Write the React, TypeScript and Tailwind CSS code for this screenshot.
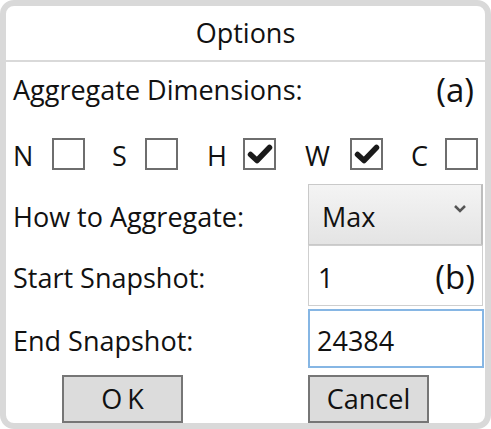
const dims = [
  { label: "N", labelW: "w-[39px]", ml: "ml-0", checked: false },
  { label: "S", labelW: "w-[33px]", ml: "ml-[27px]", checked: false },
  { label: "H", labelW: "w-[36px]", ml: "ml-[29px]", checked: true },
  { label: "W", labelW: "w-[45px]", ml: "ml-[29px]", checked: true },
  { label: "C", labelW: "w-[34px]", ml: "ml-[28px]", checked: false },
];

function Box({ checked }: { checked: boolean }) {
  return (
    <div className="w-[33px] h-[32px] border-2 border-[#6e6e6e] bg-white flex items-center justify-center">
      {checked && (
        <svg width="26" height="22" viewBox="0 0 26 22">
          <path d="M3.5 11.5 L10 17.5 L22.5 4.5" fill="none" stroke="#1a1a1a" strokeWidth="5.5" strokeLinecap="round" strokeLinejoin="round" />
        </svg>
      )}
    </div>
  );
}

export default function App() {
  return (
    <div className="w-[491px] h-[429px] bg-white">
      <div
        className="w-[491px] h-[429px] border-[6px] border-[#d9d9d9] rounded-[14px] bg-white flex flex-col text-[#111] text-[27px] leading-none"
        style={{ fontFamily: '"Open Sans", "Noto Sans", sans-serif' }}
      >
        <div className="h-[56px] flex items-center justify-center">Options</div>
        <div className="h-[2px] bg-[#d9d9d9]" />

        <div className="h-[54px] flex items-center justify-between pl-[7px] pr-[11px] pt-[3px]">
          <span>Aggregate Dimensions:</span>
          <span className="text-[33px]">(a)</span>
        </div>

        <div className="mt-[24px] h-[32px] flex items-center pl-[7px]">
          {dims.map((d) => (
            <div key={d.label} className={`flex items-center ${d.ml}`}>
              <span className={`${d.labelW} pt-[3px]`}>{d.label}</span>
              <Box checked={d.checked} />
            </div>
          ))}
        </div>

        <div className="mt-[14px] h-[61px] flex items-center pl-[7px]">
          <span className="w-[295px] pt-[5px]">How to Aggregate:</span>
          <div className="w-[175px] h-[61px] bg-gradient-to-b from-[#f4f4f4] to-[#e4e4e4] border border-[#c9c9c9] border-r-2 border-r-[#bdbdbd] flex items-center justify-between pl-[13px] pr-[14px]">
            <span className="pt-[5px]">Max</span>
            <svg width="14" height="10" viewBox="0 0 14 10" className="mb-[10px]">
              <path d="M2 2 L7 7 L12 2" fill="none" stroke="#555" strokeWidth="2.5" />
            </svg>
          </div>
        </div>

        <div className="h-[61px] flex items-center pl-[7px]">
          <span className="w-[295px] pt-[5px]">Start Snapshot:</span>
          <div className="w-[175px] h-[61px] bg-white border border-[#cfcfcf] flex items-center justify-between pl-[9px] pr-[7px]">
            <span className="pt-[5px]">1</span>
            <span className="text-[33px] pt-[2px]">(b)</span>
          </div>
        </div>

        <div className="mt-[3px] h-[59px] flex items-center pl-[7px]">
          <span className="w-[295px] pt-[5px]">End Snapshot:</span>
          <div className="w-[176px] h-[59px] bg-white border-2 border-[#86b6e4] flex items-center pl-[7px]">
            <span className="pt-[5px]">24384</span>
          </div>
        </div>

        <div className="mt-[7px] flex pl-[56px] relative z-10">
          <div className="w-[121px] h-[48px] bg-[#dcdcdc] border-2 border-[#767676] flex items-center justify-center tracking-[5px] pl-[5px]">
            OK
          </div>
          <div className="ml-[125px] w-[121px] h-[48px] bg-[#dcdcdc] border-2 border-[#767676] flex items-center justify-center">
            Cancel
          </div>
        </div>
      </div>
    </div>
  );
}
